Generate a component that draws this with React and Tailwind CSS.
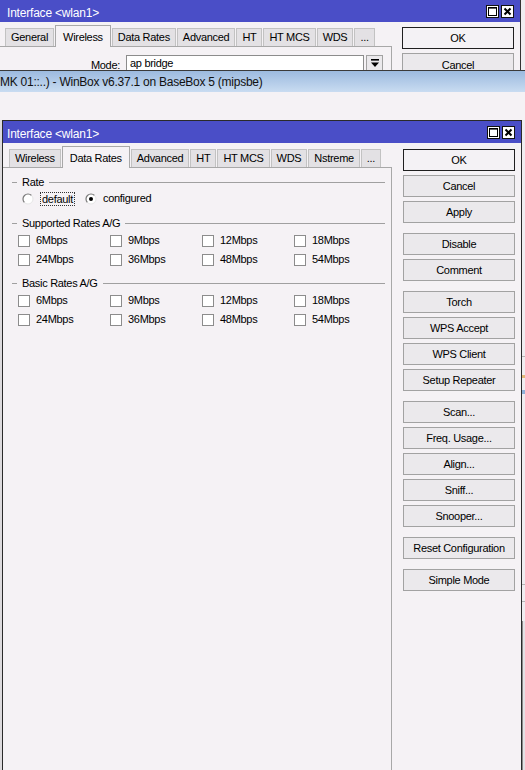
import React from "react";

const BG = "bg-[#f5f2f5]";

function WinIcons() {
  return (
    <div className="flex gap-[2px] pt-[1px]">
      <div className="flex h-[13px] w-[13px] items-center justify-center border border-[#111] bg-white">
        <svg width="9" height="9" viewBox="0 0 9 9">
          <rect x="0.5" y="0.5" width="8" height="8" fill="none" stroke="#000" />
          <rect x="0" y="0" width="9" height="1.6" fill="#000" />
        </svg>
      </div>
      <div className="flex h-[13px] w-[13px] items-center justify-center border border-[#111] bg-white">
        <svg width="9" height="9" viewBox="0 0 9 9">
          <path d="M1.5 1.5 L7.5 7.5 M7.5 1.5 L1.5 7.5" stroke="#000" strokeWidth="2" />
        </svg>
      </div>
    </div>
  );
}

function TitleBar({ title, pl }) {
  return (
    <div className={`flex h-[22px] shrink-0 items-center justify-between bg-[#4a4ec7] pr-[6px] text-[12px] text-white ${pl}`}>
      <span className="pt-[3px] tracking-[-0.2px]">{title}</span>
      <WinIcons />
    </div>
  );
}

function Tabs({ items, active, pl }) {
  return (
    <div className={`flex h-[24px] shrink-0 items-end ${pl}`}>
      {items.map((t) =>
        t === active ? (
          <div
            key={t}
            className={`relative z-10 -mb-px mr-[1px] flex h-[22px] items-start border border-b-0 border-[#a8a8a8] ${BG} px-[7px] pt-[3px]`}
          >
            {t}
          </div>
        ) : (
          <div
            key={t}
            className="mr-[1px] flex h-[18px] items-center border border-b-0 border-[#c2c2c2] bg-[#e3e1e4] px-[5px]"
          >
            {t}
          </div>
        )
      )}
    </div>
  );
}

function Btn({ label, def }) {
  return (
    <div
      className={`flex h-[22px] w-[112px] shrink-0 items-center justify-center border ${
        def ? "border-[#1f1f1f] bg-[#f4f2f5]" : "border-[#a2a2a2] bg-[#ebe9ec]"
      }`}
    >
      {label}
    </div>
  );
}

function Radio({ checked }) {
  return (
    <svg width="12" height="12" viewBox="0 0 12 12" className="shrink-0">
      <circle cx="6" cy="6" r="5" fill="#fff" />
      <path d="M2.46 9.54 A5 5 0 0 1 9.54 2.46" fill="none" stroke="#7a7a7a" strokeWidth="1.2" />
      <path d="M9.54 2.46 A5 5 0 0 1 2.46 9.54" fill="none" stroke="#e6e6e6" strokeWidth="1" />
      {checked && <circle cx="6" cy="6" r="2" fill="#000" />}
    </svg>
  );
}

function GroupHead({ title }) {
  return (
    <div className="flex h-[16px] items-center">
      <div className="ml-[9px] w-[5px] border-t border-[#a0a0a0]" />
      <span className="px-[5px]">{title}</span>
      <div className="mr-[6px] flex-1 border-t border-[#a0a0a0]" />
    </div>
  );
}

function RateRow({ items }) {
  return (
    <div className="flex h-[19px] items-center pl-[15px]">
      {items.map((r) => (
        <div key={r} className="flex w-[92px] items-center gap-[6px]">
          <div className="h-[12px] w-[12px] border border-[#8c8c8c] bg-white" />
          <span>{r}</span>
        </div>
      ))}
    </div>
  );
}

const groups = [
  ["OK", "Cancel", "Apply"],
  ["Disable", "Comment"],
  ["Torch", "WPS Accept", "WPS Client", "Setup Repeater"],
  ["Scan...", "Freq. Usage...", "Align...", "Sniff...", "Snooper..."],
  ["Reset Configuration"],
  ["Simple Mode"],
];

function BackStrip() {
  return (
    <div className="flex w-[3px] shrink-0 flex-col bg-[#efedf0]">
      <div className="h-[236px]" />
      <div className="h-[1px] bg-[#b5b5b5]" />
      <div className="h-[18px]" />
      <div className="h-[3px] bg-[#e2b978]" />
      <div className="h-[12px]" />
      <div className="h-[4px] bg-[#8fb1d8]" />
      <div className="h-[190px]" />
      <div className="h-[1px] bg-[#b5b5b5]" />
      <div className="h-[16px]" />
      <div className="h-[1px] bg-[#b5b5b5]" />
      <div className="h-[19px]" />
      <div className="flex-1 border-l border-[#8a8a8a] bg-[#e4e2e5]" />
    </div>
  );
}

export default function App() {
  return (
    <div
      className={`flex h-[770px] w-[525px] flex-col overflow-hidden ${BG} font-['Liberation_Sans',Arial,sans-serif] text-[11px] tracking-[-0.3px] text-black`}
    >
      {/* window behind */}
      <div className="flex h-[70px] shrink-0 overflow-hidden">
        <div className={`flex w-[521px] shrink-0 flex-col border-r border-[#333] ${BG}`}>
          <TitleBar title="Interface <wlan1>" pl="pl-[7px]" />
          <div className="flex">
            <div className="flex w-[392px] flex-col">
              <Tabs
                items={["General", "Wireless", "Data Rates", "Advanced", "HT", "HT MCS", "WDS", "..."]}
                active="Wireless"
                pl="pl-[5px]"
              />
              <div className="flex h-[40px] items-start border-t border-r border-[#a8a8a8] pt-[8px]">
                <div className="w-[120px] pt-[2px] text-right">Mode:</div>
                <div className="ml-[6px] flex h-[17px] w-[238px] items-center border border-[#8c8c8c] bg-white pl-[3px]">
                  ap bridge
                </div>
                <div className="ml-[2px] flex h-[17px] w-[17px] items-center justify-center border border-[#a2a2a2] bg-[#ebe9ec]">
                  <svg width="8" height="9" viewBox="0 0 8 9">
                    <rect x="0" y="0" width="8" height="1.6" fill="#000" />
                    <path d="M0 3.5 H8 L4 8 Z" fill="#000" />
                  </svg>
                </div>
              </div>
            </div>
            <div className="flex flex-col gap-[4px] pl-[10px] pt-[5px]">
              <Btn label="OK" def />
              <div className="flex h-[22px] w-[112px] items-start justify-center border border-[#a2a2a2] bg-[#ebe9ec] pt-[3px]">
                Cancel
              </div>
            </div>
          </div>
        </div>
        <div className="flex-1 bg-[#efedf0]" />
      </div>

      {/* WinBox main title */}
      <div className="flex h-[22px] shrink-0 items-center border-t border-[#3a3a3a] bg-gradient-to-b from-[#9cbadf] to-[#c9dcf1] text-[12px] tracking-[-0.25px] text-[#111]">
        MK 01::..) - WinBox v6.37.1 on BaseBox 5 (mipsbe)
      </div>
      <div className="h-[28px] shrink-0" />

      {/* active window */}
      <div className="flex min-h-0 flex-1">
        <div className="w-[2px] shrink-0 bg-[#dcdadd]" />
        <div className={`flex w-[520px] shrink-0 flex-col border-x border-t border-[#2a2a2a] ${BG}`}>
          <TitleBar title="Interface <wlan1>" pl="pl-[4px]" />
          <div className="flex min-h-0 flex-1">
            <div className="flex w-[389px] flex-col">
              <Tabs
                items={["Wireless", "Data Rates", "Advanced", "HT", "HT MCS", "WDS", "Nstreme", "..."]}
                active="Data Rates"
                pl="pl-[6px]"
              />
              <div className="flex flex-1 flex-col border-t border-r border-[#a8a8a8] pt-[6px]">
                <GroupHead title="Rate" />
                <div className="flex h-[17px] items-center pl-[19px]">
                  <Radio />
                  <span className="ml-[6px] border border-dotted border-[#333] px-[1px] leading-[12px]">default</span>
                  <span className="ml-[10px]">
                    <Radio checked />
                  </span>
                  <span className="ml-[6px]">configured</span>
                </div>
                <div className="mt-[8px]">
                  <GroupHead title="Supported Rates A/G" />
                  <RateRow items={["6Mbps", "9Mbps", "12Mbps", "18Mbps"]} />
                  <RateRow items={["24Mbps", "36Mbps", "48Mbps", "54Mbps"]} />
                </div>
                <div className="mt-[6px]">
                  <GroupHead title="Basic Rates A/G" />
                  <RateRow items={["6Mbps", "9Mbps", "12Mbps", "18Mbps"]} />
                  <RateRow items={["24Mbps", "36Mbps", "48Mbps", "54Mbps"]} />
                </div>
              </div>
            </div>
            <div className="flex flex-col gap-[10px] pl-[11px] pt-[6px]">
              {groups.map((g, i) => (
                <div key={i} className="flex flex-col gap-[4px]">
                  {g.map((b) => (
                    <Btn key={b} label={b} def={b === "OK"} />
                  ))}
                </div>
              ))}
            </div>
          </div>
        </div>
        <BackStrip />
      </div>
    </div>
  );
}
